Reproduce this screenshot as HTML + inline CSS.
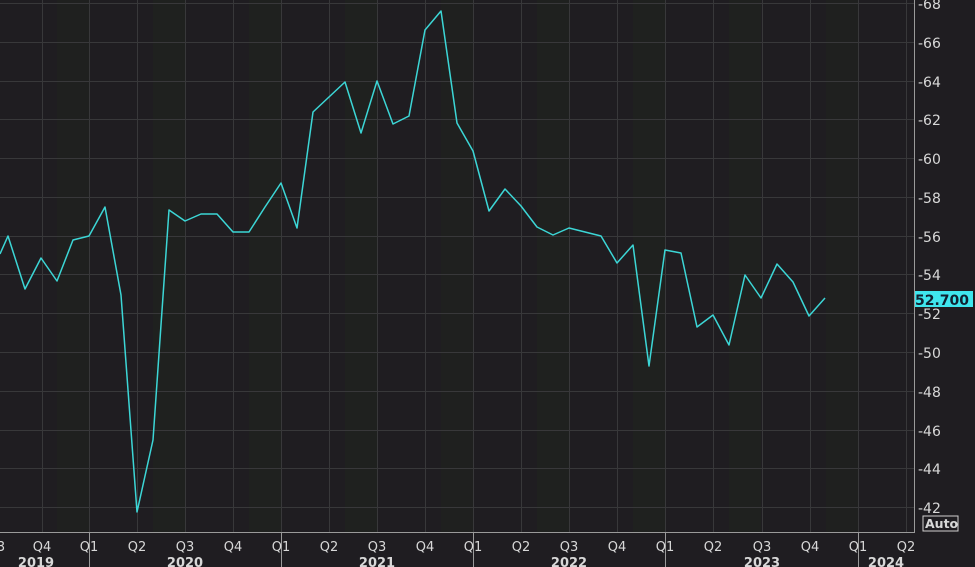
<!DOCTYPE html>
<html><head><style>
body{margin:0;background:#1f1d21;width:975px;height:567px;overflow:hidden}
svg{display:block}
text{font-family:"DejaVu Sans","Liberation Sans",sans-serif;fill:#d8d8d8}
</style></head><body>
<svg width="975" height="567" viewBox="0 0 975 567">
<rect width="975" height="567" fill="#1f1d21"/>
<g fill="#1f221f" opacity="0.8">
<rect x="57" y="0" width="32" height="532"/>
<rect x="153" y="0" width="32" height="532"/>
<rect x="249" y="0" width="32" height="532"/>
<rect x="345" y="0" width="32" height="532"/>
<rect x="441" y="0" width="32" height="532"/>
<rect x="537" y="0" width="32" height="532"/>
<rect x="633" y="0" width="32" height="532"/>
<rect x="729" y="0" width="32" height="532"/>
<rect x="826" y="0" width="32" height="532"/>
</g>
<g stroke="#38383a" stroke-width="1">
<line x1="0" y1="3.5" x2="914" y2="3.5"/><line x1="0" y1="42.5" x2="914" y2="42.5"/><line x1="0" y1="81.5" x2="914" y2="81.5"/><line x1="0" y1="119.5" x2="914" y2="119.5"/><line x1="0" y1="158.5" x2="914" y2="158.5"/><line x1="0" y1="197.5" x2="914" y2="197.5"/><line x1="0" y1="236.5" x2="914" y2="236.5"/><line x1="0" y1="274.5" x2="914" y2="274.5"/><line x1="0" y1="313.5" x2="914" y2="313.5"/><line x1="0" y1="352.5" x2="914" y2="352.5"/><line x1="0" y1="391.5" x2="914" y2="391.5"/><line x1="0" y1="430.5" x2="914" y2="430.5"/><line x1="0" y1="468.5" x2="914" y2="468.5"/><line x1="0" y1="507.5" x2="914" y2="507.5"/>
<line x1="42.5" y1="0" x2="42.5" y2="532"/><line x1="89.5" y1="0" x2="89.5" y2="532"/><line x1="137.5" y1="0" x2="137.5" y2="532"/><line x1="185.5" y1="0" x2="185.5" y2="532"/><line x1="233.5" y1="0" x2="233.5" y2="532"/><line x1="281.5" y1="0" x2="281.5" y2="532"/><line x1="329.5" y1="0" x2="329.5" y2="532"/><line x1="377.5" y1="0" x2="377.5" y2="532"/><line x1="425.5" y1="0" x2="425.5" y2="532"/><line x1="473.5" y1="0" x2="473.5" y2="532"/><line x1="521.5" y1="0" x2="521.5" y2="532"/><line x1="569.5" y1="0" x2="569.5" y2="532"/><line x1="617.5" y1="0" x2="617.5" y2="532"/><line x1="665.5" y1="0" x2="665.5" y2="532"/><line x1="713.5" y1="0" x2="713.5" y2="532"/><line x1="762.5" y1="0" x2="762.5" y2="532"/><line x1="810.5" y1="0" x2="810.5" y2="532"/><line x1="858.5" y1="0" x2="858.5" y2="532"/><line x1="906.5" y1="0" x2="906.5" y2="532"/>
</g>
<g stroke="#9a9a9a" stroke-width="1">
<line x1="914.5" y1="0" x2="914.5" y2="533"/>
<line x1="0" y1="532.5" x2="915" y2="532.5"/>
<line x1="89.5" y1="532" x2="89.5" y2="567"/><line x1="281.5" y1="532" x2="281.5" y2="567"/><line x1="473.5" y1="532" x2="473.5" y2="567"/><line x1="665.5" y1="532" x2="665.5" y2="567"/><line x1="858.5" y1="532" x2="858.5" y2="567"/>
</g>
<polyline fill="none" stroke="#3cd6d6" stroke-width="1.5" stroke-linejoin="round" points="0,254 8,236 25,289 41,258 57,281 73,240 89,236 105,207 121,295 137,512 153,440 169,210 185,221 201,214 217,214 233,232 249,232 265,207 281,183 297,228 313,112 329,97 345,82 361,133 377,81 393,124 409,116 425,30 441,11 457,123 473,151 489,211 505,189 521,206 537,227 553,235 569,228 585,232 601,236 617,263 633,245 649,366 665,250 681,253 697,327 713,315 729,345 745,275 761,298 777,264 793,282 809,316 825,298"/>
<g font-size="14">
<text x="918" y="9">-68</text><text x="918" y="48">-66</text><text x="918" y="87">-64</text><text x="918" y="125">-62</text><text x="918" y="164">-60</text><text x="918" y="203">-58</text><text x="918" y="242">-56</text><text x="918" y="280">-54</text><text x="918" y="319">-52</text><text x="918" y="358">-50</text><text x="918" y="397">-48</text><text x="918" y="436">-46</text><text x="918" y="474">-44</text><text x="918" y="513">-42</text>
</g>
<rect x="915" y="291" width="58" height="16" fill="#3fe6ee"/>
<text x="915" y="305" font-size="14" font-weight="bold" style="fill:#102030">52.700</text>
<rect x="923" y="516" width="35" height="15" fill="none" stroke="#d0d0d0"/>
<text x="925" y="528" font-size="12.5" font-weight="bold">Auto</text>
<g font-size="13" text-anchor="middle">
<text x="1" y="551">3</text>
<text x="42" y="551">Q4</text><text x="89" y="551">Q1</text><text x="137" y="551">Q2</text><text x="185" y="551">Q3</text><text x="233" y="551">Q4</text><text x="281" y="551">Q1</text><text x="329" y="551">Q2</text><text x="377" y="551">Q3</text><text x="425" y="551">Q4</text><text x="473" y="551">Q1</text><text x="521" y="551">Q2</text><text x="569" y="551">Q3</text><text x="617" y="551">Q4</text><text x="665" y="551">Q1</text><text x="713" y="551">Q2</text><text x="762" y="551">Q3</text><text x="810" y="551">Q4</text><text x="858" y="551">Q1</text><text x="906" y="551">Q2</text>
</g>
<g font-size="13" font-weight="bold" text-anchor="middle">
<text x="36" y="567">2019</text><text x="185" y="567">2020</text><text x="377" y="567">2021</text><text x="569" y="567">2022</text><text x="762" y="567">2023</text><text x="886" y="567">2024</text>
</g>
</svg>
</body></html>
